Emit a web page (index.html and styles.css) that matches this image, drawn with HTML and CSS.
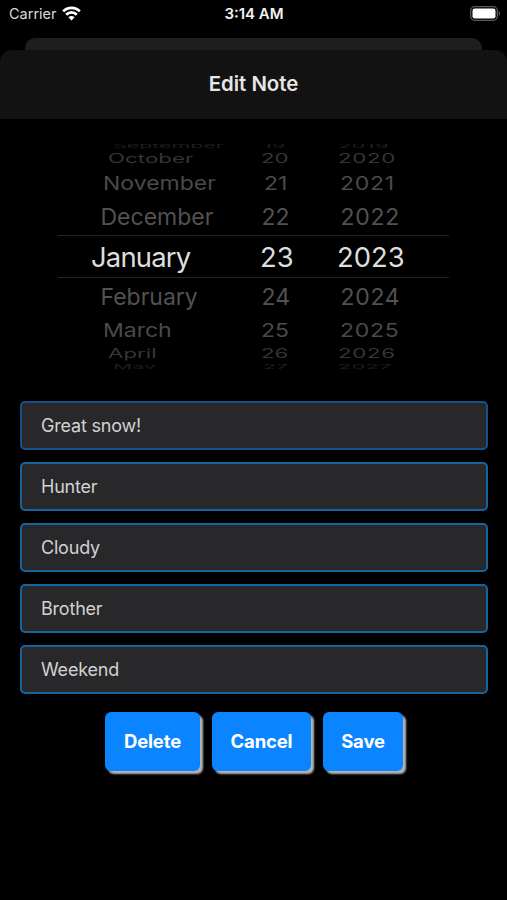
FILE: index.html
```
<!DOCTYPE html>
<html lang="en">
<head>
    <meta charset="UTF-8">
    <meta name="viewport" content="width=device-width, initial-scale=1.0">
    <title>Edit Note</title>
    <link rel="stylesheet" href="styles.css">
</head>
<body>
    <div class="status-bar">
        <div class="carrier">
            <span>Carrier</span>
            <svg class="wifi" width="19" height="15" viewBox="0 0 19 15" fill="none" stroke="#fff" stroke-width="2.7">
                <path d="M1.2 5.4C5.6 0.7 13.4 0.7 17.8 5.4"/>
                <path d="M4.2 8.7C7.2 5.7 11.8 5.7 14.8 8.7"/>
                <path d="M9.5 14.4L6.4 11.3C8.1 9.7 10.9 9.7 12.6 11.3Z" fill="#fff" stroke="none"/>
            </svg>
        </div>
        <div class="time">3:14 AM</div>
        <div class="power">
            <svg width="31" height="15" viewBox="0 0 31 15">
                <rect x="0.7" y="0.7" width="26.6" height="13.6" rx="4" fill="none" stroke="#5c5c5e" stroke-width="1.3"/>
                <rect x="2.5" y="2.5" width="23" height="10" rx="2.2" fill="#fff"/>
                <path d="M28.7 5.2C30.5 5.8 30.5 9.2 28.7 9.8Z" fill="#5c5c5e"/>
            </svg>
        </div>
    </div>

    <div class="back-card"></div>

    <div class="sheet">
        <h1 class="title">Edit Note</h1>

        <div class="picker">
            <div class="row far-up"><span>September</span><span>19</span><span>2019</span></div>
            <div class="row up-3"><span>October</span><span>20</span><span>2020</span></div>
            <div class="row up-2"><span>November</span><span>21</span><span>2021</span></div>
            <div class="row up-1"><span>December</span><span>22</span><span>2022</span></div>
            <div class="row selected"><span>January</span><span>23</span><span>2023</span></div>
            <div class="row down-1"><span>February</span><span>24</span><span>2024</span></div>
            <div class="row down-2"><span>March</span><span>25</span><span>2025</span></div>
            <div class="row down-3"><span>April</span><span>26</span><span>2026</span></div>
            <div class="row far-down"><span>May</span><span>27</span><span>2027</span></div>
        </div>

        <form class="form">
            <input class="field dim" type="text" value="Great snow!">
            <input class="field" type="text" value="Hunter">
            <input class="field" type="text" value="Cloudy">
            <input class="field" type="text" value="Brother">
            <input class="field" type="text" value="Weekend">
        </form>

        <div class="buttons">
            <button class="btn delete">Delete</button>
            <button class="btn cancel">Cancel</button>
            <button class="btn save">Save</button>
        </div>
    </div>
</body>
</html>
```
FILE: styles.css
```
* {
    box-sizing: border-box;
}

body {
    margin: 0;
    height: 900px;
    background-color: #000;
    color: #e6e6e6;
    font-family: Inter, "Liberation Sans", sans-serif;
    overflow: hidden;
}

.status-bar {
    display: grid;
    grid-template-columns: 1fr auto 1fr;
    align-items: center;
    height: 27px;
    padding: 0 8px 0 9px;
}

.carrier {
    display: flex;
    align-items: center;
    gap: 5px;
    color: #d8d8d8;
    font-size: 14.5px;
}

.carrier svg,
.power svg {
    display: block;
}

.time {
    color: #f2f2f2;
    font-size: 15px;
    font-weight: 600;
}

.power {
    justify-self: end;
    margin-right: -2px;
}

.back-card {
    height: 12px;
    margin: 11px 25px 0;
    border-radius: 10px 10px 0 0;
    background-color: #1e1e20;
}

.sheet {
    height: 850px;
}

.title {
    margin: 0;
    height: 69px;
    border-radius: 12px 12px 0 0;
    background-color: #121212;
    font-size: 20.4px;
    font-weight: 600;
    line-height: 68px;
    text-align: center;
}

/* date wheel */
.picker {
    height: 225px;
    margin: 25px 58px 0;
    overflow: hidden;
}

.row {
    display: grid;
    align-items: center;
    grid-template-columns: 161px 79px 1fr;
    height: 36px;
    padding-left: 42.5px;
    font-size: 23px;
    line-height: 28px;
    color: #525252;
}

.row span {
    justify-self: start;
    transform-origin: 0 50%;
}

.row span:last-child {
    letter-spacing: 0.7px;
}

.selected {
    height: 43px;
    padding-left: 33px;
    grid-template-columns: 169px 77px 1fr;
    border-top: 1px solid #242424;
    border-bottom: 1px solid #242424;
    font-size: 27.4px;
    color: #dedede;
}

.selected span:first-child {
    letter-spacing: -0.8px;
}

.selected span:last-child {
    letter-spacing: 0;
}

.down-1 {
    height: 37px;
}

.up-2,
.down-2 {
    height: 32px;
    padding-left: 45px;
    grid-template-columns: 158px 79px 1fr;
    color: #4a4a4a;
}

.up-2 {
    grid-template-columns: 161px 76px 1fr;
}

.down-2 {
    height: 30px;
}

.up-2 span,
.down-2 span {
    transform: scaleY(0.82);
}

.up-3,
.down-3 {
    height: 17px;
    padding-left: 50px;
    grid-template-columns: 153px 77px 1fr;
    line-height: 17px;
    color: #363636;
}

.down-3 {
    height: 18px;
    line-height: 18px;
}

.up-3 span,
.down-3 span {
    transform: scale(0.97, 0.54);
}

.far-up,
.far-down {
    height: 6px;
    padding-left: 55px;
    grid-template-columns: 150px 75px 1fr;
    line-height: 6px;
    color: #1f1f1f;
}

.far-up span,
.far-down span {
    transform: translateY(-1px) scale(0.93, 0.24);
}

.far-down span {
    transform: translateY(1px) scale(0.93, 0.24);
}

.form {
    display: flex;
    flex-direction: column;
    gap: 12px;
    margin: 32px 19px 0 20px;
}

.field {
    height: 49px;
    padding: 0 19px;
    border: 2px solid #1763a0;
    border-radius: 5px;
    background-color: #28282a;
    color: #d2d2d2;
    font-family: inherit;
    font-size: 18px;
    letter-spacing: -0.2px;
    outline: none;
}

.dim {
    border-color: #144f8e;
}

.buttons {
    display: flex;
    gap: 12px;
    margin: 18px 0 0 105px;
}

.btn {
    height: 59px;
    padding: 0 0 2px;
    border: none;
    border-radius: 6px;
    background-color: #0a84ff;
    box-shadow: 3px 3px 2px #b4b4b4;
    color: #fff;
    font-family: inherit;
    font-size: 18.5px;
    font-weight: 700;
    letter-spacing: -0.15px;
}

.delete {
    width: 95px;
}

.cancel {
    width: 99px;
}

.save {
    width: 80px;
}
```
